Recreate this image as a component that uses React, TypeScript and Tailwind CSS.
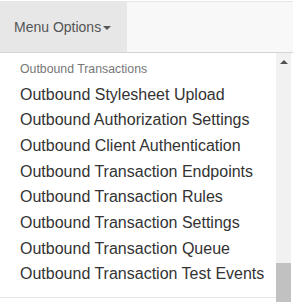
import React from "react";

const items = [
  "Outbound Stylesheet Upload",
  "Outbound Authorization Settings",
  "Outbound Client Authentication",
  "Outbound Transaction Endpoints",
  "Outbound Transaction Rules",
  "Outbound Transaction Settings",
  "Outbound Transaction Queue",
  "Outbound Transaction Test Events",
];

export default function App() {
  return (
    <div
      className="w-[293px] h-[302px] bg-white overflow-hidden flex flex-col"
      style={{ fontFamily: '"Liberation Sans", Arial, sans-serif' }}
    >
      <div className="h-[1px] bg-white" />
      <div className="h-[52px] flex border-t border-b border-[#e7e7e7] border-b-[#d4d4d4] bg-[#f8f8f8]">
        <div className="w-[127px] h-full bg-[#e7e7e7] flex items-center pl-[14px] text-[14px] text-[#555]">
          <span>Menu Options</span>
          <span className="ml-[2px] mt-[1px] w-0 h-0 border-l-[4px] border-r-[4px] border-t-[4px] border-l-transparent border-r-transparent border-t-[#555]" />
        </div>
      </div>
      <div className="flex flex-1 min-h-0">
        <div className="w-[276px] flex flex-col pt-[5px]">
          <div className="px-[20px] py-[3px] text-[12.3px] leading-[17px] text-[#777]">
            Outbound Transactions
          </div>
          {items.map((t) => (
            <div
              key={t}
              className="px-[20px] pt-[3.5px] pb-[2.5px] text-[16px] leading-[19.7px] text-[#333] whitespace-nowrap"
            >
              {t}
            </div>
          ))}
          <div className="mt-[10px] h-[1px] bg-[#e5e5e5]" />
        </div>
        <div className="w-[15px] bg-[#f1f1f1] flex flex-col">
          <div className="h-[17px] flex items-center justify-center">
            <svg width="8" height="5" viewBox="0 0 8 5">
              <path d="M0 5 L4 1 L8 5 Z" fill="#505050" />
            </svg>
          </div>
          <div className="flex-1" />
          <div className="h-[39px] bg-[#c1c1c1]" />
        </div>
        <div className="flex-1 bg-white" />
      </div>
    </div>
  );
}
